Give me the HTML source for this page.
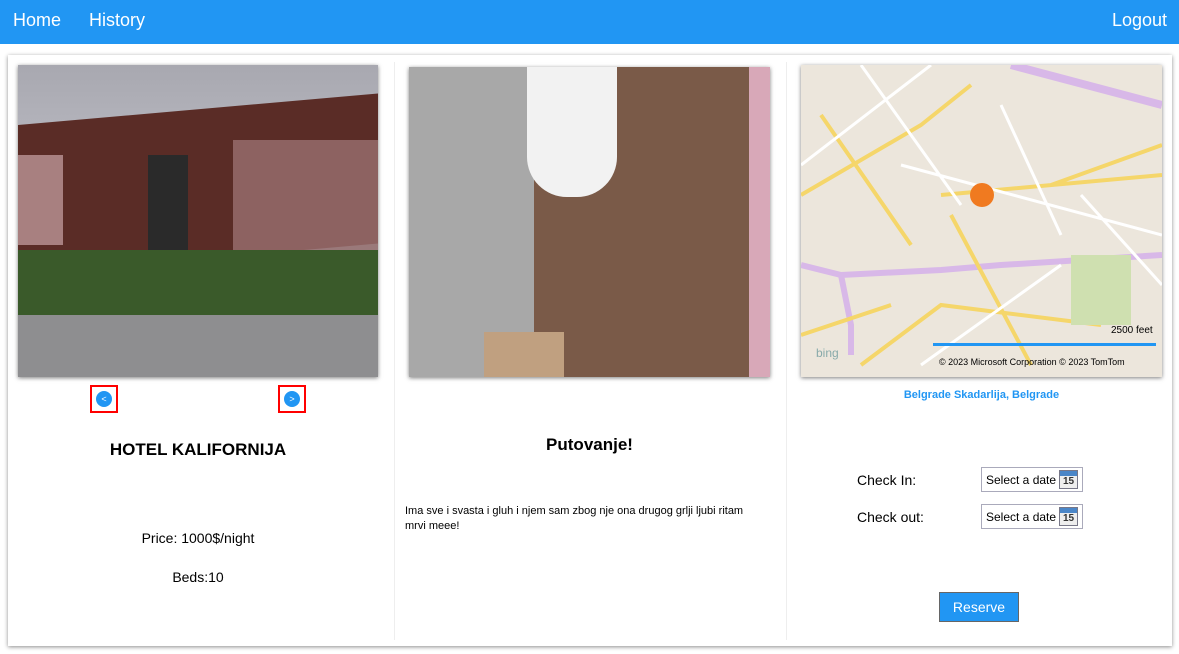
<!DOCTYPE html>
<html><head><meta charset="utf-8"><style>
*{box-sizing:border-box;margin:0;padding:0}
body{width:1179px;height:654px;background:#fff;font-family:"Liberation Sans",sans-serif;position:relative;overflow:hidden;color:#000}
.nav{position:absolute;left:0;top:0;width:1179px;height:44px;background:#2196f3;color:#fff;font-size:18px}
.nav span{position:absolute;top:10px}
.card{position:absolute;left:8px;top:55px;width:1164px;height:591px;background:#fff;box-shadow:0 1px 4px rgba(0,0,0,.45)}
.sep{position:absolute;top:62px;width:1px;height:578px;background:#eee}
.img{position:absolute;overflow:hidden;box-shadow:0 1px 4px rgba(0,0,0,.5)}
.abs{position:absolute}
.btn{position:absolute;width:28px;height:28px;border:2px solid #f00}
.btn i{position:absolute;left:4px;top:4px;width:16px;height:16px;border-radius:50%;background:#2196f3;color:#fff;font-size:9px;font-style:normal;text-align:center;line-height:16px}
.date{position:absolute;left:981px;width:102px;height:25px;border:1px solid #aab;background:#fff;font-size:12px;padding:5px 0 0 4px}
.cal{position:absolute;right:4px;top:2px;width:19px;height:19px;border:1px solid #778;background:#eee;font-size:10px;text-align:center;line-height:22px;font-weight:bold;color:#333}
.cal:before{content:"";position:absolute;left:0;top:0;width:17px;height:5px;background:#4a86c8}
</style></head><body>
<div class="nav"><span style="left:13px">Home</span><span style="left:89px">History</span><span style="right:12px">Logout</span></div>
<div class="card"></div>
<div class="sep" style="left:394px"></div><div class="sep" style="left:786px"></div>

<div class="img" style="left:18px;top:65px;width:360px;height:312px;background:#9a9aa2">
 <div class="abs" style="left:0;top:0;width:360px;height:70px;background:linear-gradient(#a8a8b0,#b4b4bc)"></div>
 <div class="abs" style="left:0;top:60px;width:360px;height:150px;background:#5a2c26;transform:skewY(-5deg);transform-origin:left"></div>
 <div class="abs" style="left:130px;top:90px;width:40px;height:110px;background:#2a2a2a"></div>
 <div class="abs" style="left:215px;top:75px;width:145px;height:110px;background:#9a7070;opacity:.8"></div>
 <div class="abs" style="left:0;top:90px;width:45px;height:90px;background:#a88080"></div>
 <div class="abs" style="left:0;top:185px;width:360px;height:70px;background:#3a5a2a"></div>
 <div class="abs" style="left:0;top:250px;width:360px;height:62px;background:#8e8e90"></div>
</div>
<div class="btn" style="left:90px;top:385px"><i>&lt;</i></div>
<div class="btn" style="left:278px;top:385px"><i>&gt;</i></div>
<div class="abs" style="left:18px;width:360px;top:440px;text-align:center;font-weight:bold;font-size:17px">HOTEL KALIFORNIJA</div>
<div class="abs" style="left:18px;width:360px;top:530px;text-align:center;font-size:14px">Price: 1000$/night</div>
<div class="abs" style="left:18px;width:360px;top:569px;text-align:center;font-size:14px">Beds:10</div>

<div class="img" style="left:409px;top:67px;width:361px;height:310px;background:#a8a8a8">
 <div class="abs" style="left:125px;top:0;width:236px;height:310px;background:#7a5a48"></div>
 <div class="abs" style="left:118px;top:0;width:90px;height:130px;background:#f2f2f2;border-radius:0 0 40px 40px"></div>
 <div class="abs" style="left:340px;top:0;width:21px;height:310px;background:#d8a8b8"></div>
 <div class="abs" style="left:75px;top:265px;width:80px;height:45px;background:#c0a080"></div>
</div>
<div class="abs" style="left:409px;width:361px;top:435px;text-align:center;font-weight:bold;font-size:17px">Putovanje!</div>
<div class="abs" style="left:405px;width:358px;top:504px;font-size:11px;line-height:15px">Ima sve i svasta i gluh i njem sam zbog nje ona drugog grlji ljubi ritam mrvi meee!</div>

<div class="img" style="left:801px;top:65px;width:361px;height:312px;background:#ece6dc">
 <svg width="361" height="312" style="position:absolute;left:0;top:0">
  <path d="M0 200 L40 210 L140 205 L200 200 L361 190" stroke="#d8b8e8" stroke-width="6" fill="none"/>
  <path d="M40 210 L50 260 L50 290" stroke="#d8b8e8" stroke-width="6" fill="none"/>
  <path d="M210 0 L361 40" stroke="#d8b8e8" stroke-width="8" fill="none"/>
  <path d="M0 130 L120 60 L170 20 M140 130 L361 110 M60 300 L140 240 L300 260 M150 150 L230 300 M20 50 L110 180 M250 120 L361 80 M0 270 L90 240" stroke="#f5d66a" stroke-width="4" fill="none"/>
  <path d="M60 0 L160 140 M0 100 L130 0 M100 100 L361 170 M200 40 L260 170 M280 130 L361 220 M120 300 L260 200" stroke="#fff" stroke-width="3" fill="none"/>
  <rect x="270" y="190" width="60" height="70" fill="#cfe0b0"/>
  <circle cx="181" cy="130" r="12" fill="#f07a20"/>
  <rect x="132" y="278" width="223" height="3" fill="#2196f3"/>
  <text x="310" y="268" font-size="10" font-family="Liberation Sans">2500 feet</text>
  <text x="138" y="300" font-size="9" font-family="Liberation Sans">© 2023 Microsoft Corporation   © 2023 TomTom</text>
  <text x="15" y="292" font-size="12" fill="#8aa" font-family="Liberation Sans">bing</text>
 </svg>
</div>
<div class="abs" style="left:801px;width:361px;top:389px;text-align:center;font-weight:bold;font-size:11px;color:#2196f3">Belgrade Skadarlija, Belgrade</div>
<div class="abs" style="left:857px;top:472px;font-size:14px">Check In:</div>
<div class="abs" style="left:857px;top:509px;font-size:14px">Check out:</div>
<div class="date" style="top:467px">Select a date<div class="cal">15</div></div>
<div class="date" style="top:504px">Select a date<div class="cal">15</div></div>
<div class="abs" style="left:939px;top:592px;width:80px;height:30px;background:#2196f3;border:1px solid #666;color:#fff;font-size:14px;text-align:center;line-height:28px">Reserve</div>
</body></html>
